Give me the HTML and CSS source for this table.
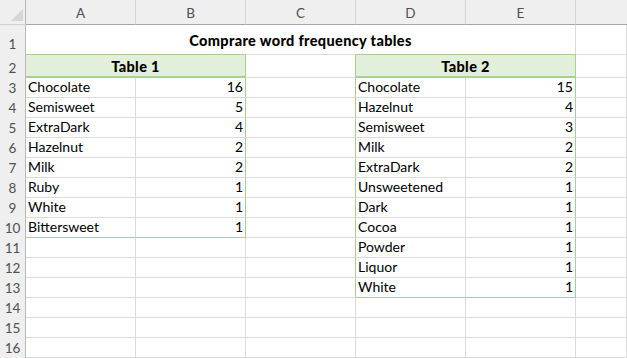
FILE: index.html
```html
<!DOCTYPE html>
<html>
<head>
<meta charset="utf-8">
<link rel="stylesheet" href="styles.css">
</head>
<body>
<div class="sheet">
  <div class="corner"><svg class="tri" width="12" height="12" viewBox="0 0 12 12"><polygon points="12,0 12,12 0,12" fill="#d6d6d6"/></svg></div>
  <div class="ch">A</div><div class="ch">B</div><div class="ch">C</div><div class="ch">D</div><div class="ch">E</div><div class="ch last"></div>

  <div class="rh">1</div><div class="title">Comprare word frequency tables</div><div class="cell top-row"></div>

  <div class="rh">2</div><div class="th">Table 1</div><div class="cell r2 gr"></div><div class="th">Table 2</div><div class="cell r2"></div>

  <div class="rh">3</div><div class="cell">Chocolate</div><div class="cell num gr">16</div><div class="cell gr"></div><div class="cell">Chocolate</div><div class="cell num gr">15</div><div class="cell"></div>
  <div class="rh">4</div><div class="cell">Semisweet</div><div class="cell num gr">5</div><div class="cell gr"></div><div class="cell">Hazelnut</div><div class="cell num gr">4</div><div class="cell"></div>
  <div class="rh">5</div><div class="cell">ExtraDark</div><div class="cell num gr">4</div><div class="cell gr"></div><div class="cell">Semisweet</div><div class="cell num gr">3</div><div class="cell"></div>
  <div class="rh">6</div><div class="cell">Hazelnut</div><div class="cell num gr">2</div><div class="cell gr"></div><div class="cell">Milk</div><div class="cell num gr">2</div><div class="cell"></div>
  <div class="rh">7</div><div class="cell">Milk</div><div class="cell num gr">2</div><div class="cell gr"></div><div class="cell">ExtraDark</div><div class="cell num gr">2</div><div class="cell"></div>
  <div class="rh">8</div><div class="cell">Ruby</div><div class="cell num gr">1</div><div class="cell gr"></div><div class="cell">Unsweetened</div><div class="cell num gr">1</div><div class="cell"></div>
  <div class="rh">9</div><div class="cell">White</div><div class="cell num gr">1</div><div class="cell gr"></div><div class="cell">Dark</div><div class="cell num gr">1</div><div class="cell"></div>
  <div class="rh">10</div><div class="cell gb">Bittersweet</div><div class="cell num gr gb">1</div><div class="cell gr"></div><div class="cell">Cocoa</div><div class="cell num gr">1</div><div class="cell"></div>
  <div class="rh">11</div><div class="cell"></div><div class="cell"></div><div class="cell gr"></div><div class="cell">Powder</div><div class="cell num gr">1</div><div class="cell"></div>
  <div class="rh">12</div><div class="cell"></div><div class="cell"></div><div class="cell gr"></div><div class="cell">Liquor</div><div class="cell num gr">1</div><div class="cell"></div>
  <div class="rh">13</div><div class="cell"></div><div class="cell"></div><div class="cell gr"></div><div class="cell gb">White</div><div class="cell num gr gb">1</div><div class="cell"></div>
  <div class="rh">14</div><div class="cell"></div><div class="cell"></div><div class="cell"></div><div class="cell"></div><div class="cell"></div><div class="cell"></div>
  <div class="rh">15</div><div class="cell"></div><div class="cell"></div><div class="cell"></div><div class="cell"></div><div class="cell"></div><div class="cell"></div>
  <div class="rh">16</div><div class="cell"></div><div class="cell"></div><div class="cell"></div><div class="cell"></div><div class="cell"></div><div class="cell"></div>
</div>
</body>
</html>
```

FILE: styles.css
```css
html, body {
  margin: 0;
  padding: 0;
  background: #ffffff;
}
body {
  font-family: Lato, "Liberation Sans", sans-serif;
  font-size: 14px;
  color: #000;
}
.sheet {
  display: grid;
  grid-template-columns: 26px repeat(5, 110px) 1fr;
  grid-template-rows: 25px 29px 24px repeat(14, 20px);
  width: 627px;
  height: 358px;
  overflow: hidden;
}
.sheet > div {
  box-sizing: border-box;
  min-width: 0;
}
.corner {
  background: #efefef;
  border-right: 1px solid #b9b9b9;
  border-bottom: 1px solid #d0d0d0;
  display: flex;
  align-items: flex-end;
  justify-content: flex-end;
  padding: 0 2px 3px 0;
}
.tri { display: block; }
.ch {
  background: #efefef;
  border-right: 1px solid #d4d4d4;
  border-bottom: 1px solid #a6a6a6;
  color: #505050;
  font-size: 13.5px;
  display: flex;
  align-items: center;
  justify-content: center;
  padding-top: 1px;
}
.ch.last { border-right: none; }
.rh {
  background: #efefef;
  border-right: 1px solid #b9b9b9;
  color: #505050;
  font-size: 13.5px;
  display: flex;
  align-items: flex-end;
  justify-content: center;
  padding-bottom: 2px;
  line-height: 16px;
}
.cell {
  border-right: 1px solid #dadada;
  border-bottom: 1px solid #dadada;
  display: flex;
  align-items: flex-end;
  padding: 0 2px 2px 2px;
  line-height: 17px;
  white-space: nowrap;
}
.num { justify-content: flex-end; }
.gr { border-right-color: #a9d08e; }
.gb { border-bottom-color: #a9d08e; }
.title {
  grid-column: span 5;
  border-right: 1px solid #dadada;
  font-weight: 900;
  font-size: 14.5px;
  letter-spacing: 0.35px;
  display: flex;
  align-items: center;
  justify-content: center;
  padding-top: 2px;
}
.top-row { border-bottom: none; }
.r2 {
  border-top: 1px solid #dadada;
}
.th {
  grid-column: span 2;
  background: #e2efda;
  border-top: 1px solid #a9d08e;
  border-right: 1px solid #a9d08e;
  border-bottom: 2px solid #a9d08e;
  font-weight: 900;
  font-size: 14.5px;
  letter-spacing: 0.35px;
  display: flex;
  align-items: center;
  justify-content: center;
  padding-top: 1px;
}
```
